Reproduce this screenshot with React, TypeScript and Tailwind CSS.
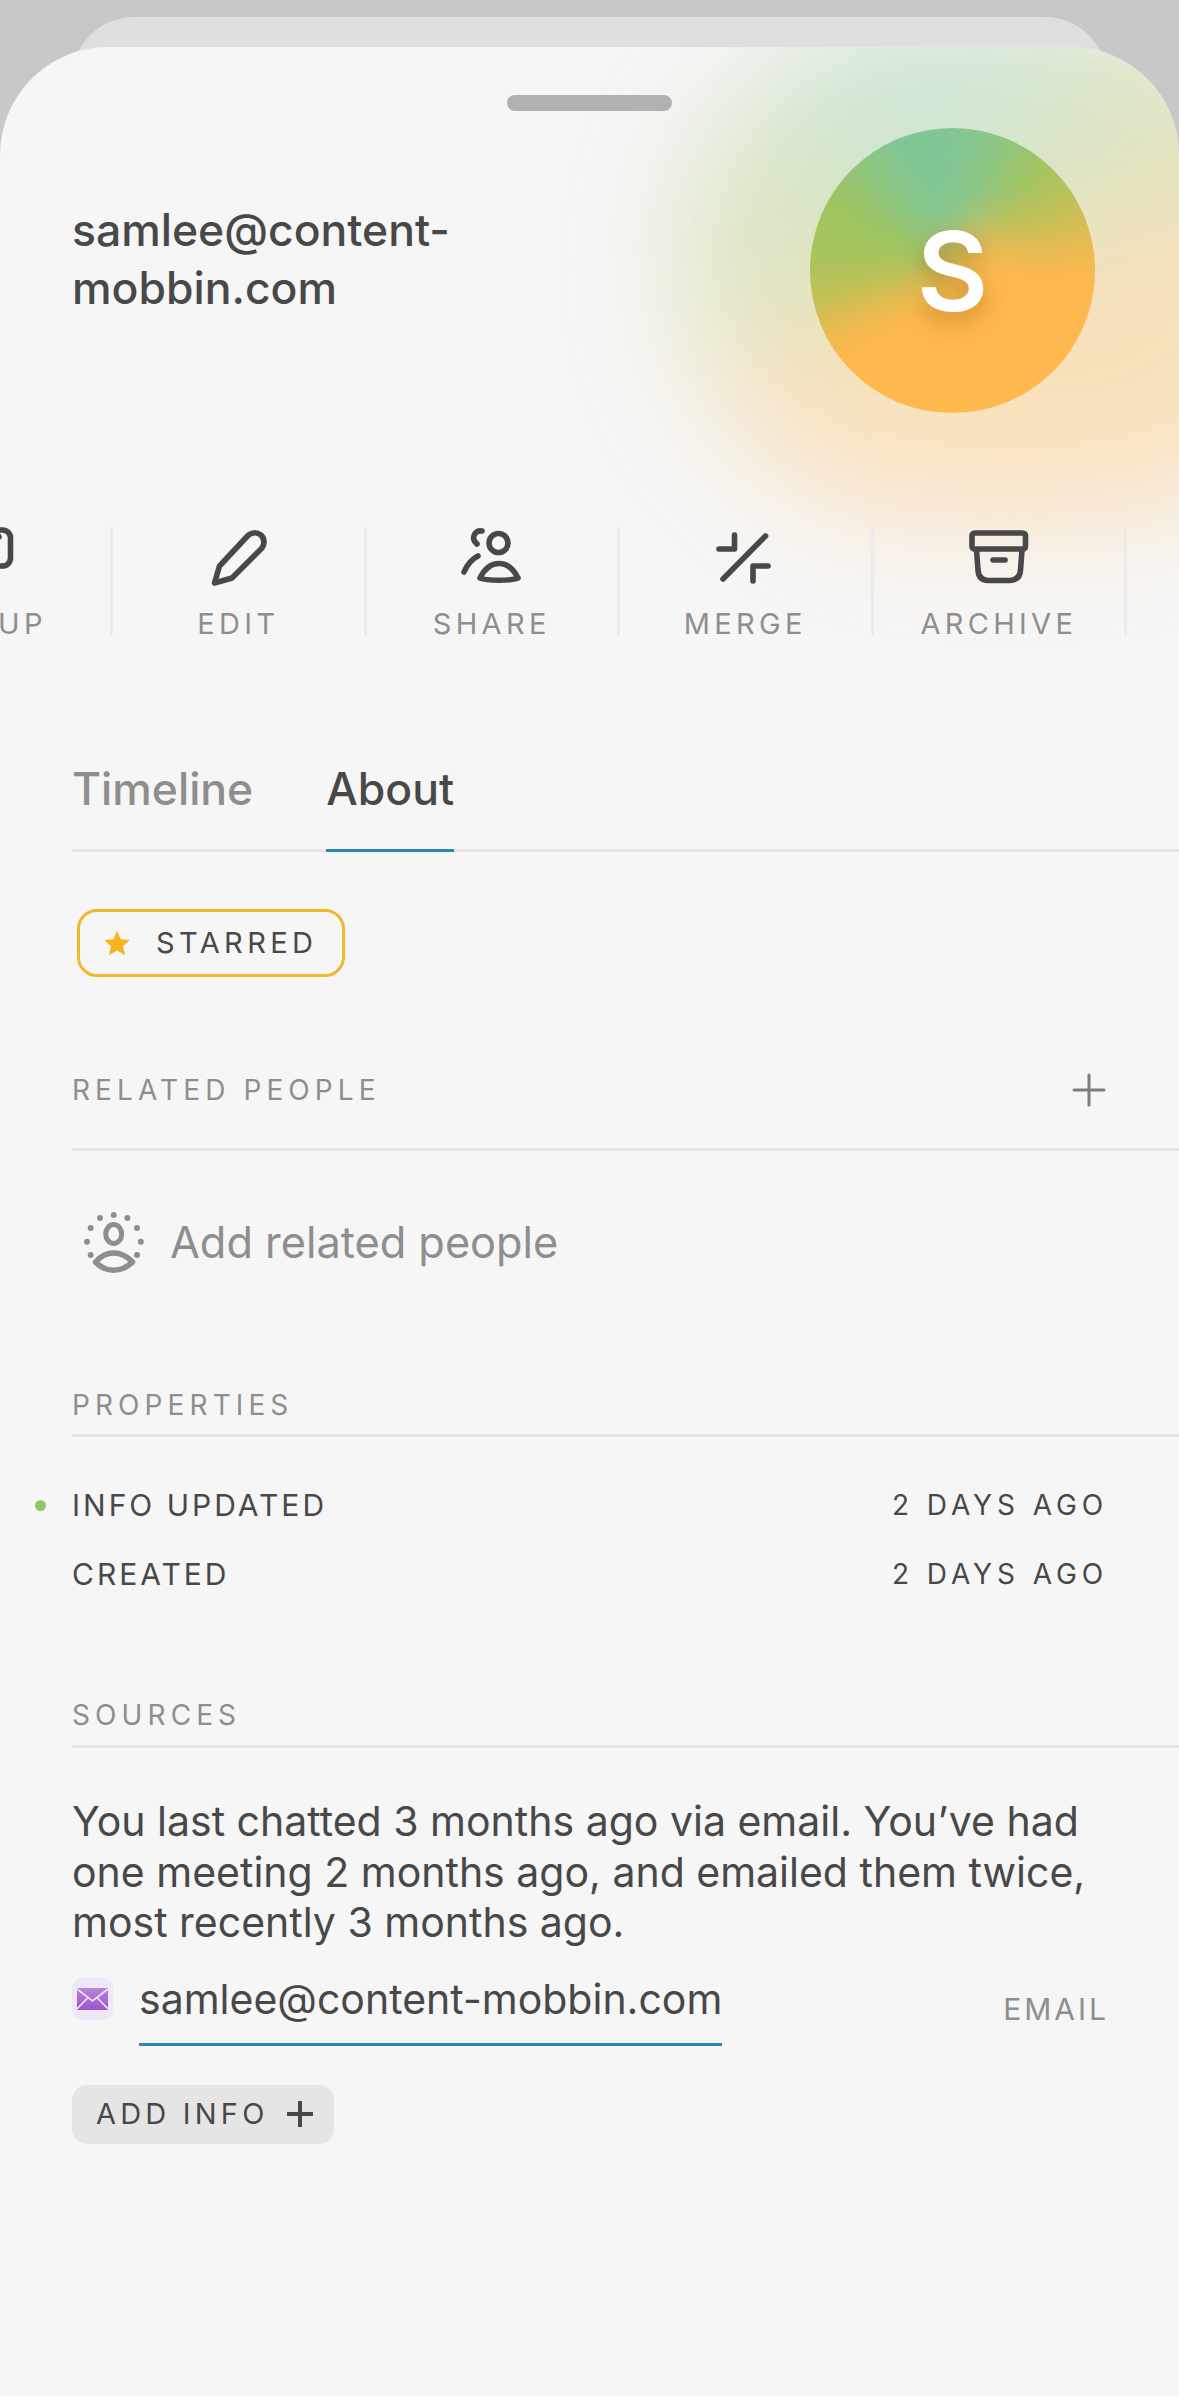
const font = "font-['Inter','Noto_Sans',sans-serif]";

function Divider() {
  return <div className="w-[3px] h-[108px] bg-[#ebebeb] shrink-0" />;
}

function Action({ label, children }: { label: string; children: React.ReactNode }) {
  return (
    <div className="w-[250.5px] shrink-0 flex flex-col items-center">
      <div className="h-[66px] flex items-start justify-center">{children}</div>
      <div className="mt-[13px] text-[29px] leading-[36px] tracking-[4.3px] text-[#8e8e8e] whitespace-nowrap">{label}</div>
    </div>
  );
}

function Svg({ box, w, h, children }: { box: string; w: number; h: number; children: React.ReactNode }) {
  return (
    <svg width={w} height={h} viewBox={box} fill="none" stroke="#484848" strokeWidth="5.6" strokeLinecap="round" strokeLinejoin="round">
      {children}
    </svg>
  );
}

function SectionHead({ label, right }: { label: string; right?: React.ReactNode }) {
  return (
    <div className="flex items-center justify-between">
      <div className="text-[28px] leading-[36px] tracking-[5.1px] text-[#8e8e8e]">{label}</div>
      {right}
    </div>
  );
}

function Line({ className }: { className: string }) {
  return <div className={`h-[3px] bg-[#e4e4e4] ${className}`} />;
}

function PropRow({ label, value, dot }: { label: string; value: string; dot?: boolean }) {
  return (
    <div className="relative flex items-center justify-between h-[46px] pr-[71px] text-[#484848]">
      {dot && <div className="absolute left-[-37px] top-[18px] w-[11px] h-[11px] rounded-full bg-[#8ccb63]" />}
      <div className="text-[30px] tracking-[3px]">{label}</div>
      <div className="text-[28px] tracking-[4.9px]">{value}</div>
    </div>
  );
}

export default function App() {
  return (
    <div className={`w-[1179px] h-[2396px] bg-[#c8c8c8] overflow-hidden ${font}`}>
      <div className="pt-[17px]">
        <div className="mx-[72px] h-[62px] rounded-t-[75px] bg-[#dfdfdf]" />
        <div className="relative -mt-[32px] h-[2349px] rounded-t-[108px] bg-[#f6f6f6] overflow-hidden">
          <div className="absolute left-[682px] top-[-30px] w-[660px] h-[500px] rounded-full blur-[60px] opacity-[0.34] bg-[conic-gradient(at_41%_52%,#7fc695_0deg,#8ec683_20deg,#a4c55c_45deg,#c3c058_62deg,#ffb84d_90deg,#ffb84d_235deg,#d9bd50_250deg,#a6c45c_272deg,#a2c55c_300deg,#7fc695_335deg,#7fc695_360deg)]" />

          <div className="relative">
            <div className="pt-[48px] flex justify-center">
              <div className="w-[165px] h-[16px] rounded-full bg-[#b1b1b1]" />
            </div>

            <div className="flex justify-between pl-[72px] pr-[84px] pt-[17px]">
              <div className="pt-[73px] text-[44.5px] leading-[58px] font-medium text-[#484848] w-[500px]">
                samlee@content-
                <br />
                mobbin.com
              </div>
              <div className="relative w-[285px] h-[285px] rounded-full overflow-hidden flex items-center justify-center">
                <div className="absolute -inset-[40px] blur-[20px] bg-[radial-gradient(circle_at_58%_48%,#ffb84d_0%,#ffb84d_6%,rgba(255,184,77,0)_18%),conic-gradient(#7fc695_0deg,#8cc687_18deg,#a4c55c_42deg,#c3c058_62deg,#ffb84d_90deg,#ffb84d_235deg,#d9bd50_250deg,#a6c45c_270deg,#a2c55c_298deg,#7fc695_335deg,#7fc695_360deg)]" />
                <div className="relative text-[110px] leading-none font-semibold text-white [text-shadow:0_10px_22px_rgba(130,80,0,0.4)]">S</div>
              </div>
            </div>

            <div className="flex items-start -ml-[140.5px] mt-[114px]">
              <Action label="GROUP">
                <Svg box="-45.5 527 60 48" w={60} h={48}>
                  <rect x="-25" y="530" width="35" height="36" rx="8" />
                  <path d="M-2 536 L-1.500 537" />
                </Svg>
              </Action>
              <Divider />
              <Action label="EDIT">
                <Svg box="205 527 65 62" w={65} h={62}>
                  <path d="M213.5 583 L218.5 566 L247.5 535 Q254 530.5 260 535 Q265.5 541 261 548 L231 578 Z" />
                </Svg>
              </Action>
              <Divider />
              <Action label="SHARE">
                <Svg box="458 527 66 60" w={66} h={60}>
                  <circle cx="497.5" cy="543" r="9.5" />
                  <path d="M479 578 C484 568 491 563.5 498 563.5 C505 563.5 512 568 517 578 C510 581 486 581 479 578 Z" />
                  <path d="M481 531 C474 530 469 538 476 544" />
                  <path d="M477 556 C471 559 466 565 463 572" />
                </Svg>
              </Action>
              <Divider />
              <Action label="MERGE">
                <Svg box="712 527 65 60" w={65} h={60}>
                  <path d="M733.5 535 V549 H718" />
                  <path d="M764.5 536 L722 579" />
                  <path d="M752 581 V566 H767" />
                </Svg>
              </Action>
              <Divider />
              <Action label="ARCHIVE">
                <Svg box="963 527 68 60" w={68} h={60}>
                  <rect x="970" y="533" width="53.5" height="16" rx="2.5" />
                  <path d="M974.5 550 L976 570 Q976.5 580 986 580.5 L1008 580.5 Q1018 580 1018.5 570 L1020 550" />
                  <path d="M991 560 H1003" />
                </Svg>
              </Action>
              <Divider />
            </div>

            <div className="pl-[72px] mt-[117px]">
              <div className="flex gap-[73px] text-[44.5px] leading-[60px] font-medium">
                <div className="text-[#8e8e8e]">Timeline</div>
                <div className="relative text-[#484848]">
                  About
                  <div className="absolute left-0 right-0 bottom-[-33px] h-[3px] bg-[#2e86b8]" />
                </div>
              </div>
              <Line className="mt-[30px]" />

              <div className="mt-[57px] ml-[5px] w-[268px] h-[68px] rounded-[20px] border-[3px] border-[#f2b731] flex items-center pl-[22px] gap-[24px]">
                <svg width="30" height="28" viewBox="0 0 24 24" fill="#f5b51b"><path d="M12 1.5l3.2 7.3 7.8.7-5.9 5.2 1.8 7.8L12 18.4l-6.900 4.100 1.800-7.800L1 9.500l7.800-.7z" /></svg>
                <div className="text-[29px] tracking-[4.4px] text-[#484848]">STARRED</div>
              </div>

              <div className="mt-[95px] pr-[72px]">
                <SectionHead
                  label="RELATED PEOPLE"
                  right={
                    <svg width="36" height="36" viewBox="0 0 36 36" stroke="#7c7c7c" strokeWidth="3" strokeLinecap="round"><path d="M18 3v30M3 18h30" /></svg>
                  }
                />
              </div>
              <Line className="mt-[40px]" />

              <div className="flex items-center mt-[60px] ml-[12px] gap-[26px]">
                <svg width="60" height="62" viewBox="84 1211 60 62" fill="#8e8e8e" stroke="none">
                  {[[113.7,1215],[100,1218],[127.4,1218],[90.7,1228],[137,1228],[87,1241.7],[140.8,1241.7],[90.700,1255],[137,1255]].map(([x, y]) => (
                    <circle key={`${x}-${y}`} cx={x} cy={y} r="3" />
                  ))}
                  <ellipse cx="113.7" cy="1234" rx="8" ry="9.500" fill="none" stroke="#8e8e8e" strokeWidth="5" />
                  <path d="M95.500 1262 C106 1250 121 1250 132.500 1262 C121 1273 106 1273 95.500 1262 Z" fill="none" stroke="#8e8e8e" strokeWidth="5.500" strokeLinejoin="round" />
                </svg>
                <div className="text-[43.3px] leading-[60px] text-[#8e8e8e]">Add related people</div>
              </div>

              <div className="mt-[114px]"><SectionHead label="PROPERTIES" /></div>
              <Line className="mt-[11px]" />
              <div className="mt-[45px]">
                <PropRow label="INFO UPDATED" value="2 DAYS AGO" dot />
                <div className="mt-[23px]"><PropRow label="CREATED" value="2 DAYS AGO" /></div>
              </div>

              <div className="mt-[100px]"><SectionHead label="SOURCES" /></div>
              <Line className="mt-[12px]" />

              <div className="mt-[48px] text-[41px] leading-[50.5px] text-[#484848] w-[1050px]">
                You last chatted 3 months ago via email. You’ve had<br />
                one meeting 2 months ago, and emailed them twice,<br />
                most recently 3 months ago.
              </div>

              <div className="flex items-start justify-between pr-[70px] mt-[26px]">
                <div className="flex items-start gap-[26px]">
                  <div className="mt-[4px] w-[41px] h-[42px] rounded-[10px] bg-[#efe7f5] flex items-center justify-center">
                    <svg width="31" height="22" viewBox="0 0 31 22">
                      <defs>
                        <linearGradient id="mail" x1="0" y1="0" x2="0" y2="1">
                          <stop offset="0" stopColor="#b784e0" />
                          <stop offset="1" stopColor="#9a55cc" />
                        </linearGradient>
                      </defs>
                      <rect width="31" height="22" fill="url(#mail)" />
                      <path d="M0 1 L15.500 13 L31 1 M0 21 L11 9.500 M31 21 L20 9.500" stroke="#efe7f5" strokeWidth="1.600" fill="none" />
                    </svg>
                  </div>
                  <div className="relative">
                    <div className="text-[41px] leading-[50px] text-[#484848]">samlee@content-mobbin.com</div>
                    <div className="mt-[19px] h-[3px] bg-[#2e86b8]" />
                  </div>
                </div>
                <div className="mt-[13px] text-[30px] tracking-[3px] text-[#8e8e8e]">EMAIL</div>
              </div>

              <div className="mt-[39px] w-[262px] h-[59px] rounded-[15px] bg-[#e5e5e5] flex items-center pl-[24px] gap-[16px]">
                <div className="text-[29px] tracking-[4.200px] text-[#484848]">ADD INFO</div>
                <svg width="30" height="30" viewBox="0 0 30 30" stroke="#484848" strokeWidth="4"><path d="M15 2v26M2 15h26" /></svg>
              </div>
            </div>
          </div>
        </div>
      </div>
    </div>
  );
}
